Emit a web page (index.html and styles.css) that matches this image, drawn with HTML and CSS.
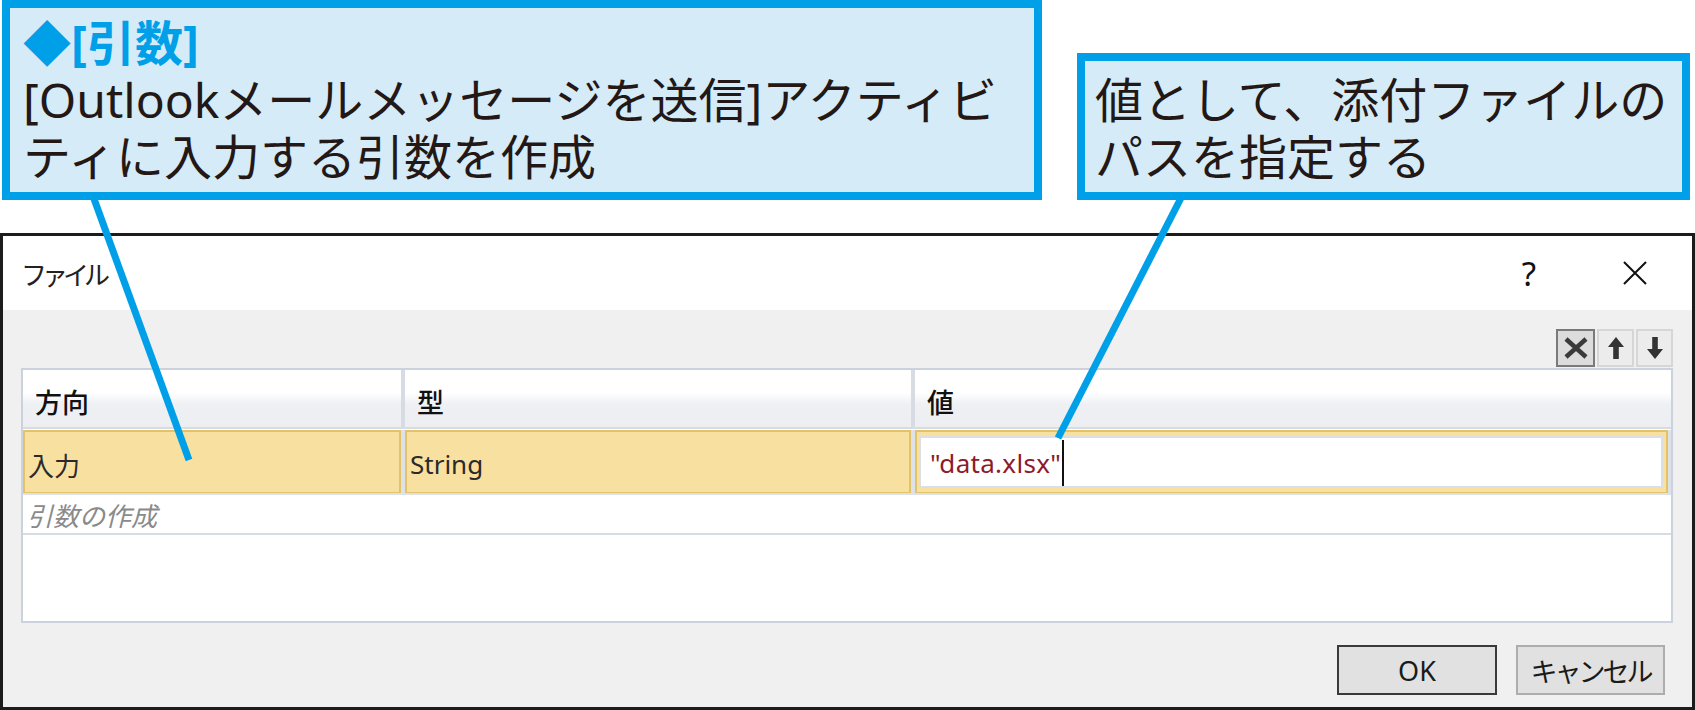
FILE: index.html
```html
<!DOCTYPE html>
<html lang="ja">
<head>
<meta charset="utf-8">
<title>ファイル</title>
<link rel="stylesheet" href="styles.css">
</head>
<body>
<div class="page">
  <div class="notes">
    <div class="callout callout-left">
      <div class="callout-title">◆[引数]</div>
      <div class="callout-text">[Outlookメールメッセージを送信]アクティビ<br>ティに入力する引数を作成</div>
    </div>
    <div class="callout callout-right">
      <div class="callout-text">値として、添付ファイルの<br>パスを指定する</div>
    </div>
  </div>

  <div class="dialog">
    <div class="titlebar">
      <span class="title">ファイル</span>
      <div class="title-actions">
        <span class="help">?</span>
        <svg class="close" width="26" height="26" viewBox="0 0 26 26"><path d="M2 2 L24 24 M24 2 L2 24" stroke="#111" stroke-width="2" fill="none"/></svg>
      </div>
    </div>
    <div class="body">
      <div class="toolbar">
        <button class="tool tool-active" aria-label="削除">
          <svg width="26" height="22" viewBox="0 0 26 22"><path d="M3 2 L23 20 M23 2 L3 20" stroke="#3a3a3a" stroke-width="4.5" fill="none"/></svg>
        </button>
        <button class="tool" aria-label="上へ">
          <svg width="18" height="24" viewBox="0 0 18 24"><path d="M9 1 L17 11 L11.8 11 L11.8 23 L6.2 23 L6.2 11 L1 11 Z" fill="#333"/></svg>
        </button>
        <button class="tool" aria-label="下へ">
          <svg width="18" height="24" viewBox="0 0 18 24"><path d="M9 23 L17 13 L11.8 13 L11.8 1 L6.2 1 L6.2 13 L1 13 Z" fill="#333"/></svg>
        </button>
      </div>
      <div class="grid">
        <div class="grid-head">
          <div class="hcell">方向</div>
          <div class="hcell">型</div>
          <div class="hcell">値</div>
        </div>
        <div class="grid-row selected">
          <div class="cell">入力</div>
          <div class="cell">String</div>
          <div class="cell cell-edit">
            <div class="editor"><span class="str">"data.xlsx"</span><span class="caret"></span></div>
          </div>
        </div>
        <div class="grid-new">引数の作成</div>
        <div class="grid-fill"></div>
      </div>
      <div class="footer">
        <button class="btn btn-default">OK</button>
        <button class="btn btn-cancel">キャンセル</button>
      </div>
    </div>
  </div>

  <svg class="pointers" width="1695" height="710" viewBox="0 0 1695 710">
    <line x1="93" y1="196" x2="189" y2="460" stroke="#00a0e9" stroke-width="7"/>
    <line x1="1182" y1="196" x2="1058" y2="438" stroke="#00a0e9" stroke-width="7"/>
  </svg>
</div>
</body>
</html>
```

FILE: styles.css
```css
* { box-sizing: border-box; }
html, body { margin: 0; padding: 0; background: #ffffff; }
body { width: 1695px; height: 710px; overflow: hidden; }

.page {
  position: relative;
  width: 1695px;
  height: 710px;
}

/* ---------- annotation callouts ---------- */
.notes {
  display: flex;
  align-items: flex-end;
  height: 200px;
  padding-left: 2px;
  gap: 35px;
  margin-bottom: 33px;
}
.callout {
  border: 8px solid #00a0e9;
  background: #d5ebf8;
  color: #231815;
  font-family: "Noto Sans", "Noto Sans CJK JP", sans-serif;
  font-size: 48px;
  line-height: 57px;
  white-space: nowrap;
}
.callout-left {
  width: 1040px;
  height: 200px;
  padding: 6px 0 0 13px;
}
.callout-right {
  width: 613px;
  height: 147px;
  padding: 10px 0 0 10px;
}
.callout-title {
  color: #00a0e9;
  font-weight: 700;
}

/* ---------- dialog ---------- */
.dialog {
  width: 1695px;
  height: 477px;
  border: 3px solid #1c1c1c;
  display: flex;
  flex-direction: column;
  font-family: "Noto Sans", "Noto Sans CJK JP", sans-serif;
  color: #1e1e1e;
}
.titlebar {
  height: 74px;
  background: #ffffff;
  display: flex;
  align-items: center;
  justify-content: space-between;
  padding: 0 44px 0 18px;
}
.title {
  font-family: "Noto Sans CJK JP", sans-serif;
  font-size: 26px;
  letter-spacing: -5px;
  color: #222;
}
.title-actions {
  display: flex;
  align-items: center;
  gap: 86px;
}
.help {
  font-family: "Noto Sans", sans-serif;
  font-size: 33px;
  line-height: 1;
  color: #111;
}
.close { display: block; }

.body {
  flex: 1;
  background: #f0f0f0;
  padding: 19px 19px 12px 18px;
  display: flex;
  flex-direction: column;
}
.toolbar {
  display: flex;
  justify-content: flex-end;
  gap: 2px;
  height: 39px;
}
.tool {
  width: 37px;
  height: 38px;
  margin: 0;
  padding: 0;
  border: 2px solid #d6d6d6;
  background: #ececec;
  display: flex;
  align-items: center;
  justify-content: center;
}
.tool-active {
  width: 39px;
  border-color: #7a7a7a;
  background: #dcdcdc;
}

.grid {
  height: 255px;
  border: 2px solid #cbd2dd;
  background: #ffffff;
  display: flex;
  flex-direction: column;
}
.grid-head {
  height: 59px;
  display: grid;
  grid-template-columns: 378px 506px 1fr;
  column-gap: 4px;
  background: #d7dce4;
  border-bottom: 2px solid #d7dce4;
}
.hcell {
  background: linear-gradient(to bottom, #ffffff 0%, #ffffff 40%, #eef0f4 60%, #eceef2 100%);
  font-family: "Noto Sans CJK JP", sans-serif;
  font-size: 27px;
  font-weight: 500;
  color: #111;
  display: flex;
  align-items: center;
  padding: 6px 0 0 12px;
}
.grid-row {
  margin-top: 1px;
  height: 63px;
  display: grid;
  grid-template-columns: 378px 506px 1fr;
  column-gap: 4px;
  background: #dde1e8;
  padding-right: 3px;
}
.cell {
  background: #f8e1a0;
  border: 2px solid #e3c36a;
  font-size: 26px;
  color: #2a2a2a;
  display: flex;
  align-items: center;
  padding: 4px 0 0 3px;
}
.cell:first-child { font-family: "Noto Sans CJK JP", sans-serif; }
.cell-edit {
  padding: 4px 3px 4px 2px;
  align-items: stretch;
}
.editor {
  flex: 1;
  background: #ffffff;
  border: 2px solid #d9dee7;
  display: flex;
  align-items: center;
  padding: 2px 0 0 9px;
}
.str {
  color: #8e1a2a;
  font-size: 26px;
  letter-spacing: 0.3px;
}
.caret {
  display: inline-block;
  width: 2px;
  height: 46px;
  background: #111;
  margin-left: 1px;
}
.grid-new {
  height: 42px;
  border-top: 2px solid #dde1e8;
  border-bottom: 2px solid #d7dce4;
  font-family: "Noto Sans CJK JP", sans-serif;
  font-style: italic;
  font-size: 26px;
  color: #8a8a8a;
  display: flex;
  align-items: center;
  padding-left: 4px;
}
.grid-fill { flex: 1; }

.footer {
  margin-top: auto;
  display: flex;
  justify-content: flex-end;
  gap: 19px;
  padding-right: 8px;
}
.btn {
  height: 50px;
  margin: 0;
  background: #e1e1e1;
  font-size: 27px;
  color: #1a1a1a;
  padding: 0;
  display: flex;
  align-items: center;
  justify-content: center;
}
.btn-default {
  width: 160px;
  border: 2px solid #3a3a3a;
  font-family: "Noto Sans", sans-serif;
}
.btn-cancel {
  width: 149px;
  border: 2px solid #adadad;
  font-family: "Noto Sans CJK JP", sans-serif;
  letter-spacing: -3px;
}

/* ---------- leader lines overlay ---------- */
.pointers {
  position: absolute;
  left: 0;
  top: 0;
  pointer-events: none;
}
```
